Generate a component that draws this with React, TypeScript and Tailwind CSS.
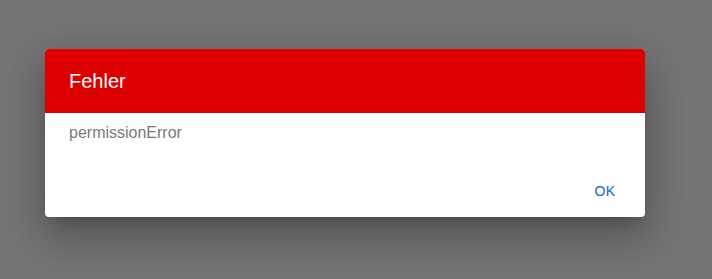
import React from 'react';

export default function App() {
  return (
    <div className="h-[279px] w-[712px] bg-[#757575] pl-[45px] pt-[49px] font-['Liberation_Sans',Arial,sans-serif]">
      <div className="w-[600px] overflow-hidden rounded bg-white shadow-[0_11px_15px_-7px_rgba(0,0,0,0.2),0_24px_38px_3px_rgba(0,0,0,0.14),0_9px_46px_8px_rgba(0,0,0,0.12)]">
        {/* title */}
        <div className="flex h-16 items-center bg-[#dd0000] px-6">
          <h2 className="text-[20px] leading-8 text-white">Fehler</h2>
        </div>
        {/* content */}
        <div className="px-6 pb-2 pt-2">
          <p className="mb-3 text-base leading-6 text-[#7a7a7a]">permissionError</p>
        </div>
        {/* actions */}
        <div className="flex justify-end p-2">
          <button className="h-9 min-w-16 rounded px-2 text-sm uppercase tracking-[0.4px] text-[#1565c0] hover:bg-[#1565c0]/5">
            OK
          </button>
        </div>
      </div>
    </div>
  );
}
